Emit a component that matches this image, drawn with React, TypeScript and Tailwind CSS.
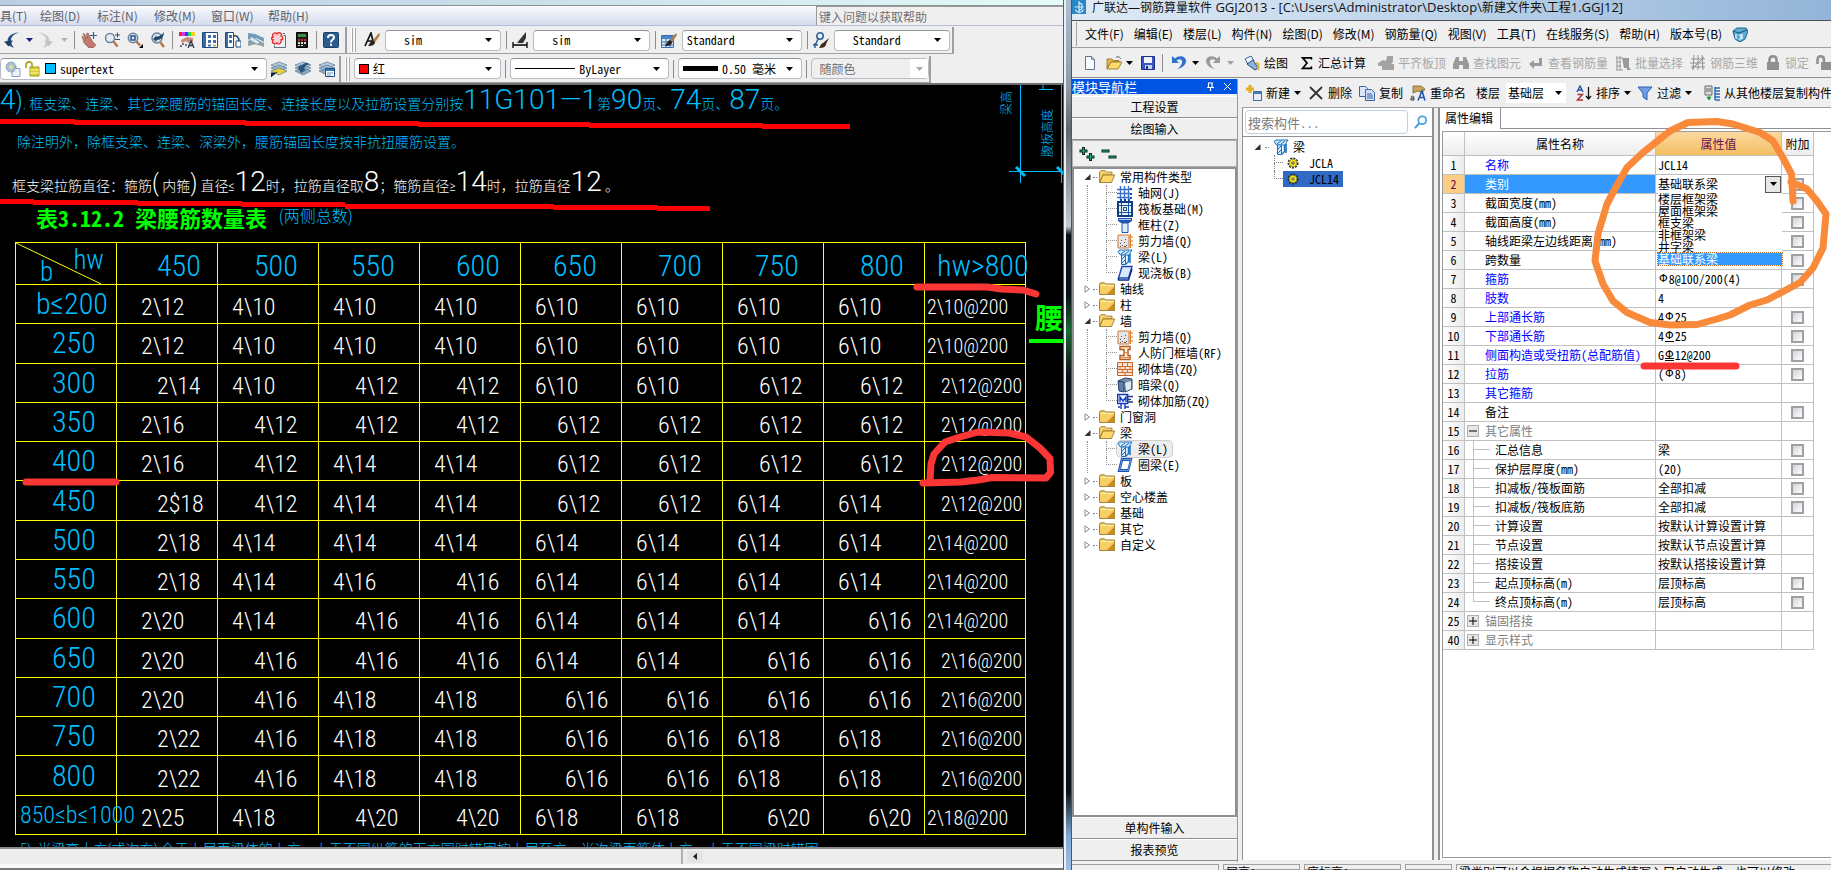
import { ReactNode } from 'react';
import { clsx } from 'clsx';

type IconProps = { children: ReactNode; size?: string; box?: string };

function Icon({ children, size = 'size-4', box = '0 0 16 16' }: IconProps) {
  return (
    <svg viewBox={box} className={clsx('shrink-0', size)} fill="none" aria-hidden="true">
      {children}
    </svg>
  );
}

function Caret({ className = 'text-black' }: { className?: string }) {
  return (
    <svg viewBox="0 0 7 4" className={clsx('h-1 w-[7px] shrink-0', className)} aria-hidden="true">
      <path d="M0 0h7L3.5 4z" fill="currentColor" />
    </svg>
  );
}

/* ---------- CAD toolbar icons ---------- */

const cadIcons = {
  undo: (
    <Icon>
      <path d="M3.500 10C3 5 7 1 15 .5 9 2.500 7 5 7 8.500c0 3 1 5 3 7-4-.5-6-3-6.500-5.500z" fill="#24507f" />
      <path d="M0 9.500l9-1-4.500 6z" fill="#1c3f66" />
    </Icon>
  ),
  redo: (
    <Icon>
      <path d="M12.500 10C13 5 9 1 1 .5c6 2 8 4.500 8 8 0 3-1 5-3 7 4-.5 6-3 6.500-5.500z" fill="#c6c9cc" />
      <path d="M16 9.500l-9-1 4.500 6z" fill="#bfc3c6" />
    </Icon>
  ),
  pan: (
    <Icon>
      <path d="M1 4l4 3-3-5 1-.5L7 6 5.500 1.500 7 1l3 6 2 3 3 3-3 3H8L3 11z" fill="#c07a70" stroke="#8d4a45" strokeWidth=".6" />
      <path d="M12.500 0v7M9 3.500h7" stroke="#35618f" strokeWidth="1.200" />
    </Icon>
  ),
  zoom: (
    <Icon>
      <circle cx="6" cy="6" r="4.500" fill="#e4edf5" stroke="#6d8299" strokeWidth="1.500" />
      <path d="M9.500 9.500l4 5" stroke="#b5764a" strokeWidth="2.500" />
      <path d="M11 3h5M13.500.5v5M11 7.500h5" stroke="#34506e" />
    </Icon>
  ),
  zoomWindow: (
    <Icon>
      <circle cx="6" cy="6" r="4.700" fill="#d6e4ef" stroke="#6d8299" strokeWidth="1.500" />
      <rect x="4" y="4" width="4" height="4" stroke="#1f4f80" strokeWidth="1.400" />
      <path d="M9.500 9.500l3.500 4" stroke="#b5764a" strokeWidth="2.500" />
      <path d="M16 12v4h-4z" fill="#000" />
    </Icon>
  ),
  zoomPrev: (
    <Icon>
      <circle cx="7" cy="6" r="5" fill="#d6e4ef" stroke="#6d8299" strokeWidth="1.500" />
      <path d="M10.500 10.500l3.500 4.500" stroke="#b5764a" strokeWidth="2.500" />
      <path d="M3 7l3.500-3.500V5C10 4 12 3 14 0c0 5-3 8-7.500 8v2z" fill="#1f456d" />
    </Icon>
  ),
  properties: (
    <Icon>
      <path d="M0 0h3v4H0z" fill="#f22" />
      <path d="M3 0h3v4H3z" fill="#d3f" />
      <path d="M6 0h3v4H6z" fill="#33f" />
      <path d="M9 0h3v4H9z" fill="#2d5" />
      <path d="M12 0h4v4h-4z" fill="#fc2" />
      <path d="M2 8l6-3 6 1v4l-5 1-2-2-4 2z" fill="#c98a7d" />
      <path d="M3 11h2v2H3zM6 12h2v2H6zM1 13h2v2H1z" fill="#777" />
      <path d="M9 16l3-7 3 7m-5-2.500h4" stroke="#25384d" strokeWidth="1.300" />
    </Icon>
  ),
  designCenter: (
    <Icon>
      <path d="M.5.5h15v15H.5z" fill="#fff" stroke="#1d4a80" />
      <path d="M1 1h3v14H1z" fill="#3a6ca3" />
      <path d="M6 3h3v3H6zM11 3h3v3h-3zM6 8h3v3H6zM11 8h3v3h-3zM6 12.500h3v2H6z" fill="#3f6ea8" />
      <path d="M11 12.500h3v2h-3z" fill="#d8b13c" />
    </Icon>
  ),
  toolPalettes: (
    <Icon>
      <path d="M.5.5h8v15h-8z" fill="#fff" stroke="#1d4a80" />
      <path d="M1 1h2v14H1z" fill="#3a6ca3" />
      <path d="M4 3h3v3H4zM4 8h3v3H4z" fill="#3f6ea8" />
      <path d="M8 4c4-1 6 1 6 6" stroke="#27496e" strokeWidth="1.600" />
      <path d="M11 9h5v6h-5z" fill="#fff" stroke="#1d4a80" />
    </Icon>
  ),
  sheetSet: (
    <Icon>
      <path d="M0 1l7 1 9 4v4L8 6 0 7z" fill="#6f9dbd" />
      <path d="M0 9l7-2 9 4v4l-8-3-8 2z" fill="#8fa3ab" />
      <path d="M3 4l9 6-2 3-9-5z" fill="#d6e3ea" stroke="#5f8298" strokeWidth=".8" />
    </Icon>
  ),
  markup: (
    <Icon>
      <path d="M12.500 3.500h2v12h-11v-2M12 1.500h2" stroke="#5f6d80" />
      <path d="M1 2h10v11H1z" fill="#fff" />
      <path d="M2 5c-2-4 3-5 4-3 2-3 6 0 4 2 3 1 2 4 0 4 1 4-3 5-4 3-2 2-6 0-4-3-2 0-2-3 0-3z" fill="#fbd0d0" stroke="#e3262c" strokeWidth="1.300" />
    </Icon>
  ),
  calculator: (
    <Icon>
      <path d="M2.500.5h11v15h-11z" fill="#1c1c1c" stroke="#000" />
      <path d="M4 2h8v3H4z" fill="#3f8a4b" />
      <path d="M4 7h2v2H4zM7 7h2v2H7zM10 7h2v2h-2z" fill="#d22" />
      <path d="M4 10h2v2H4zM7 10h2v2H7zM10 10h2v2h-2zM4 13h2v1H4zM7 13h2v1H7z" fill="#ddd" />
    </Icon>
  ),
  help: (
    <Icon>
      <rect x=".5" y=".5" width="15" height="15" rx="1" fill="#2a5c8c" stroke="#184069" />
      <path d="M5 6c0-4 6-4 6-.5 0 2-3 2.200-3 5M8 11.700v2" stroke="#fff" strokeWidth="2" />
    </Icon>
  ),
};

const brush = (
  <>
    <path d="M15 1l-5 6-2 2 2 1.500L12 9l4-6z" fill="#b27a3c" />
    <path d="M9 8c-3 1-3 4-5 6 4 0 7-1 7-4z" fill="#222" />
  </>
);

const textStyleIcon = (
  <Icon>
    <path d="M1 14L7 1l2 8M3 9h6" stroke="#111" strokeWidth="1.700" />
    {brush}
  </Icon>
);
const dimStyleIcon = (
  <Icon>
    <path d="M1 10v6M15 10v6M1 13h14" stroke="#000" strokeWidth="1.300" />
    <path d="M14 0L9 6 5 11h6l3-5z" fill="#333" />
  </Icon>
);
const tableStyleIcon = (
  <Icon>
    <path d="M.5 3.500h12v12H.5z" fill="#dbe9f8" stroke="#3a6cb0" />
    <path d="M1 4h12v3H1z" fill="#4b85cc" />
    <path d="M1 10h12M1 13h12M5 7v8M9 7v8" stroke="#3a6cb0" />
    {brush}
  </Icon>
);
const leaderStyleIcon = (
  <Icon>
    <circle cx="7" cy="4" r="3.200" stroke="#2a6296" strokeWidth="1.600" />
    <path d="M5 7l-3 7M0 13h5M2 11v5" stroke="#2a6296" strokeWidth="1.500" />
    <path d="M16 6l-6 5c-3 1-2 3-4 5 4 0 7-1 7-4z" fill="#3a2d22" />
  </Icon>
);

function LayerIcon({ kind }: { kind: 'make' | 'previous' | 'states' }) {
  return (
    <Icon>
      <path d="M0 4l8-3 8 3-8 4z" fill="#b7cbdc" stroke="#5b7a96" strokeWidth=".7" />
      <path d="M0 7l8-3 8 3-8 4z" fill="#9ab5cc" stroke="#5b7a96" strokeWidth=".7" />
      <path d="M0 10l8-3 8 3-8 4z" fill={kind === 'make' ? '#e8cf35' : '#86a7c2'} stroke="#5b7a96" strokeWidth=".7" />
      {kind === 'make' && <path d="M0 16v-4h4zM1 15l5-4" fill="#123" stroke="#123" />}
      {kind === 'previous' && <path d="M3 7l3-4v2c4-4 8-4 8-1-2-1-4 1-5 4l2 1-5 3z" fill="#2b5580" />}
      {kind === 'states' && (
        <>
          <path d="M6.500 7.500h9v8h-9z" fill="#fff" stroke="#1c4d86" />
          <path d="M7 8h8v2H7z" fill="#3b74b6" />
          <path d="M8 12h6M8 14h4" stroke="#6a90b8" />
        </>
      )}
    </Icon>
  );
}

function Combo({
  label,
  value,
  className,
  pad = 'pl-[18px]',
  children,
}: {
  label: string;
  value: string;
  className: string;
  pad?: string;
  children?: ReactNode;
}) {
  return (
    <div className={clsx('relative flex items-center gap-1 rounded-sm border border-[#b8bcc4] border-t-[#8f949c] bg-white pr-2', pad, className)}>
      {children}
      <select
        aria-label={label}
        defaultValue={value}
        className="min-w-0 flex-1 appearance-none bg-transparent text-xs leading-4 text-black outline-none"
      >
        <option>{value}</option>
      </select>
      <Caret />
    </div>
  );
}

function Separator() {
  return <span className="h-[18px] w-px shrink-0 bg-[#8c8c8c]" />;
}

function Grip() {
  return (
    <span className="flex h-full w-[5px] shrink-0 justify-between py-px">
      <span className="w-0.5 border-r border-[#a8a8a8] bg-white" />
      <span className="w-0.5 border-r border-[#a8a8a8] bg-white" />
    </span>
  );
}

function ToolButton({ label, children }: { label: string; children: ReactNode }) {
  return (
    <button type="button" aria-label={label} className="flex shrink-0 items-center">
      {children}
    </button>
  );
}

const cadTools: [string, ReactNode][] = [
  ['实时平移', cadIcons.pan],
  ['实时缩放', cadIcons.zoom],
  ['窗口缩放', cadIcons.zoomWindow],
  ['缩放上一个', cadIcons.zoomPrev],
];

const cadPalettes: [string, ReactNode][] = [
  ['特性', cadIcons.properties],
  ['设计中心', cadIcons.designCenter],
  ['工具选项板', cadIcons.toolPalettes],
  ['图纸集', cadIcons.sheetSet],
  ['标记集', cadIcons.markup],
  ['计算器', cadIcons.calculator],
];

function CadToolbars() {
  return (
    <div className="h-[59px] border-b-2 border-[#6e6e6e] bg-[#efefef] text-xs [font-family:'Noto_Sans_Mono_CJK_SC','Noto_Sans_CJK_SC',monospace]">
      <div className="flex h-[29px] items-center">
        <div className="flex h-[27px] w-[347px] shrink-0 items-center border-r-2 border-b border-[#a0a0a0] pl-1">
          <ToolButton label="放弃">{cadIcons.undo}</ToolButton>
          <span className="w-1.5" />
          <Caret className="text-[#1b1f8a]" />
          <span className="w-1" />
          <ToolButton label="重做">{cadIcons.redo}</ToolButton>
          <span className="w-2" />
          <Caret className="text-[#b5b5b5]" />
          <span className="w-1.5" />
          <Separator />
          <div className="flex gap-[7px] px-[6px]">
            {cadTools.map(([label, icon]) => (
              <ToolButton key={label} label={label}>
                {icon}
              </ToolButton>
            ))}
          </div>
          <Separator />
          <div className="flex gap-[7px] px-[6px]">
            {cadPalettes.map(([label, icon]) => (
              <ToolButton key={label} label={label}>
                {icon}
              </ToolButton>
            ))}
          </div>
          <Separator />
          <span className="w-1.5" />
          <ToolButton label="帮助">{cadIcons.help}</ToolButton>
        </div>
        <div className="flex h-[27px] w-[607px] items-center border-r-2 border-b border-[#a0a0a0] pl-1">
          <Grip />
          <div className="flex flex-1 items-center gap-[5px] pr-0.5 pl-2">
            {textStyleIcon}
            <Combo label="文字样式" value="sim" className="h-[21px] flex-1" />
            <Separator />
            {dimStyleIcon}
            <Combo label="标注样式" value="sim" className="h-[21px] flex-1" />
            <Separator />
            {tableStyleIcon}
            <Combo label="表格样式" value="Standard" className="h-[21px] w-[120px]" pad="pl-1" />
            <Separator />
            {leaderStyleIcon}
            <Combo label="多重引线样式" value="Standard" className="h-[21px] flex-1" />
          </div>
        </div>
      </div>
      <div className="flex h-7 items-center">
        <div className="flex h-[27px] w-[341px] shrink-0 items-center border-r-2 border-b border-[#a0a0a0]">
          <Combo label="图层" value="supertext" className="h-[22px] w-[267px]" pad="pl-1">
            <Icon>
              <path d="M7 7.500h8v8H7z" fill="#eaf1f8" stroke="#8aa0b8" />
              <circle cx="6" cy="6" r="5" fill="#a9c0d4" stroke="#6f8ba6" strokeDasharray="2 1.200" />
              <circle cx="6" cy="6" r="2" fill="#e3df95" />
            </Icon>
            <Icon>
              <path d="M1 7V4c0-4 6-4 6-1v3" stroke="#a5a01b" strokeWidth="1.600" />
              <path d="M5 6h9v9H5z" fill="#d8d02f" stroke="#a29a12" />
              <path d="M5 9h9M5 12h9" stroke="#fff6a0" />
            </Icon>
            <span className="size-[11px] border border-black bg-[#00bfff]" />
          </Combo>
          <div className="flex gap-2 pl-1">
            <ToolButton label="将对象的图层置为当前">
              <LayerIcon kind="make" />
            </ToolButton>
            <ToolButton label="上一个图层">
              <LayerIcon kind="previous" />
            </ToolButton>
            <ToolButton label="图层状态管理器">
              <LayerIcon kind="states" />
            </ToolButton>
          </div>
        </div>
        <div className="flex h-[27px] w-[590px] items-center gap-1 border-r-2 border-b border-[#a0a0a0] pl-1">
          <Grip />
          <Combo label="颜色" value="红" className="h-[21px] w-[149px]" pad="pl-1">
            <span className="size-[10px] border border-black bg-[#f00]" />
          </Combo>
          <Separator />
          <Combo label="线型" value="ByLayer" className="h-[21px] w-[161px]" pad="pl-1">
            <span className="h-px w-[60px] bg-black" />
          </Combo>
          <Separator />
          <Combo label="线宽" value="0.50 毫米" className="h-[21px] w-[125px]" pad="pl-1">
            <span className="h-[5px] w-[35px] bg-black" />
          </Combo>
          <Separator />
          <div className="flex h-[21px] w-[120px] items-center rounded-sm border border-[#b8bcc4] bg-[#efefef] pl-2">
            <select aria-label="打印样式" disabled className="flex-1 appearance-none bg-transparent text-xs leading-4 text-[#6f6f6f]">
              <option>随颜色</option>
            </select>
            <span className="flex h-full w-[18px] items-center justify-center bg-white">
              <Caret className="text-[#a8a8a8]" />
            </span>
          </div>
        </div>
      </div>
    </div>
  );
}

/* ---------- drawing ---------- */

// Number of web bars by beam width (rows) and web height (columns).
// Each entry keeps the side of the cell where the draughtsman put it: l, m or r.
type Mark = [string, 'l' | 'm' | 'r'];

const padCol: Record<'l' | 'm' | 'r', string> = { l: 'pl-3.5', m: 'pl-9', r: 'pl-11' };
const padFirst: Record<'l' | 'm' | 'r', string> = { l: 'pl-6', m: 'pl-9', r: 'pl-10' };
const padLast: Record<'l' | 'm' | 'r', string> = { l: 'pl-0.5', m: 'pl-4', r: 'pl-4' };

const heights = ['450', '500', '550', '600', '650', '700', '750', '800', 'hw>800'];

const barRows: { b: string; marks: Mark[] }[] = [
  { b: 'b≤200', marks: [['2\\12', 'l'], ['4\\10', 'l'], ['4\\10', 'l'], ['4\\10', 'l'], ['6\\10', 'l'], ['6\\10', 'l'], ['6\\10', 'l'], ['6\\10', 'l'], ['2\\10@200', 'l']] },
  { b: '250', marks: [['2\\12', 'l'], ['4\\10', 'l'], ['4\\10', 'l'], ['4\\10', 'l'], ['6\\10', 'l'], ['6\\10', 'l'], ['6\\10', 'l'], ['6\\10', 'l'], ['2\\10@200', 'l']] },
  { b: '300', marks: [['2\\14', 'r'], ['4\\10', 'l'], ['4\\12', 'm'], ['4\\12', 'm'], ['6\\10', 'l'], ['6\\10', 'l'], ['6\\12', 'm'], ['6\\12', 'm'], ['2\\12@200', 'r']] },
  { b: '350', marks: [['2\\16', 'l'], ['4\\12', 'm'], ['4\\12', 'm'], ['4\\12', 'm'], ['6\\12', 'm'], ['6\\12', 'm'], ['6\\12', 'm'], ['6\\12', 'm'], ['2\\12@200', 'r']] },
  { b: '400', marks: [['2\\16', 'l'], ['4\\12', 'm'], ['4\\14', 'l'], ['4\\14', 'l'], ['6\\12', 'm'], ['6\\12', 'm'], ['6\\12', 'm'], ['6\\12', 'm'], ['2\\12@200', 'r']] },
  { b: '450', marks: [['2$18', 'r'], ['4\\12', 'm'], ['4\\14', 'l'], ['4\\14', 'l'], ['6\\12', 'm'], ['6\\12', 'm'], ['6\\14', 'l'], ['6\\14', 'l'], ['2\\12@200', 'r']] },
  { b: '500', marks: [['2\\18', 'r'], ['4\\14', 'l'], ['4\\14', 'l'], ['4\\14', 'l'], ['6\\14', 'l'], ['6\\14', 'l'], ['6\\14', 'l'], ['6\\14', 'l'], ['2\\14@200', 'l']] },
  { b: '550', marks: [['2\\18', 'r'], ['4\\14', 'l'], ['4\\16', 'l'], ['4\\16', 'm'], ['6\\14', 'l'], ['6\\14', 'l'], ['6\\14', 'l'], ['6\\14', 'l'], ['2\\14@200', 'l']] },
  { b: '600', marks: [['2\\20', 'l'], ['4\\14', 'l'], ['4\\16', 'm'], ['4\\16', 'm'], ['6\\14', 'l'], ['6\\14', 'l'], ['6\\14', 'l'], ['6\\16', 'r'], ['2\\14@200', 'l']] },
  { b: '650', marks: [['2\\20', 'l'], ['4\\16', 'm'], ['4\\16', 'm'], ['4\\16', 'm'], ['6\\14', 'l'], ['6\\14', 'l'], ['6\\16', 'r'], ['6\\16', 'r'], ['2\\16@200', 'm']] },
  { b: '700', marks: [['2\\20', 'l'], ['4\\16', 'm'], ['4\\18', 'l'], ['4\\18', 'l'], ['6\\16', 'r'], ['6\\16', 'r'], ['6\\16', 'r'], ['6\\16', 'r'], ['2\\16@200', 'r']] },
  { b: '750', marks: [['2\\22', 'r'], ['4\\16', 'm'], ['4\\18', 'l'], ['4\\18', 'l'], ['6\\16', 'r'], ['6\\16', 'r'], ['6\\18', 'l'], ['6\\18', 'l'], ['2\\16@200', 'r']] },
  { b: '800', marks: [['2\\22', 'r'], ['4\\16', 'm'], ['4\\18', 'l'], ['4\\18', 'l'], ['6\\16', 'r'], ['6\\16', 'r'], ['6\\18', 'l'], ['6\\18', 'l'], ['2\\16@200', 'r']] },
  { b: '850≤b≤1000', marks: [['2\\25', 'l'], ['4\\18', 'l'], ['4\\20', 'm'], ['4\\20', 'm'], ['6\\18', 'l'], ['6\\18', 'l'], ['6\\20', 'r'], ['6\\20', 'r'], ['2\\18@200', 'l']] },
];

function markPadding(col: number, side: 'l' | 'm' | 'r') {
  if (col === 0) return padFirst[side];
  if (col === heights.length - 1) return padLast[side];
  return padCol[side];
}

function rowHeadClass(b: string) {
  if (b === '850≤b≤1000') return 'pl-1 text-2xl';
  if (b === 'b≤200') return 'pl-5 text-[30px]';
  return 'pl-9 text-[30px]';
}

function Big({ children }: { children: ReactNode }) {
  return <span className="text-[28px] font-light [font-family:Roboto,'Noto_Sans_CJK_SC',sans-serif]">{children}</span>;
}

function BarTable() {
  return (
    <table className="ml-[15px] h-[593px] w-[1011px] table-fixed border-collapse text-white">
      <thead>
        <tr className="h-[42px] text-[30px] leading-[30px] text-[#00bfff]">
          <th scope="col" className="relative border border-[#ff0] p-0 font-light">
            <svg className="absolute inset-0 size-full" viewBox="0 0 101 42" preserveAspectRatio="none" aria-hidden="true">
              <path d="M0 0l86 42" stroke="#ff0" strokeWidth="1" />
            </svg>
            <span className="flex h-10 justify-between pr-3 pl-6 text-[27px]">
              <span className="self-end leading-6">b</span>
              <span className="self-start leading-8">hw</span>
            </span>
          </th>
          {heights.map((h, i) => (
            <th
              key={h}
              scope="col"
              className={clsx(
                'border border-[#ff0] p-0 pt-1 text-left font-light whitespace-nowrap',
                i === 8 ? 'pl-3' : i % 2 ? 'pl-9' : i === 0 ? 'pl-10' : 'pl-8',
              )}
            >
              {h}
            </th>
          ))}
        </tr>
      </thead>
      <tbody>
        {barRows.map(row => (
          <tr key={row.b} className="text-2xl leading-6">
            <th
              scope="row"
              className={clsx('border border-[#ff0] p-0 text-left leading-8 font-light whitespace-nowrap text-[#00bfff]', rowHeadClass(row.b))}
            >
              {row.b}
            </th>
            {row.marks.map(([text, side], col) => (
              <td
                key={col}
                className={clsx(
                  'border border-[#ff0] p-0 pt-1.5 leading-6 whitespace-nowrap',
                  col === 8 && 'text-xl',
                  markPadding(col, side),
                )}
              >
                {text}
              </td>
            ))}
          </tr>
        ))}
      </tbody>
    </table>
  );
}

function CadDrawing() {
  return (
    <div className="relative h-[762px] overflow-hidden bg-black font-light [font-family:'Roboto_Condensed','Noto_Sans_CJK_SC',sans-serif]">
      <div className="flex flex-col text-sm whitespace-nowrap text-[#00bfff]">
        <p className="h-9 leading-[18px]">
          <Big>4</Big>
          <span className="text-2xl">)</span>. 框支梁、连梁、其它梁腰筋的锚固长度、连接长度以及拉筋设置分别按
          <Big>11G101—1</Big>第<Big>90</Big>页、<Big>74</Big>页、<Big>87</Big>页。
        </p>
        <p className="h-[46px] pl-[17px] leading-[42px]">除注明外，除框支梁、连梁、深梁外，腰筋锚固长度按非抗扭腰筋设置。</p>
        <p className="h-8 pl-3 leading-[28px] text-white">
          框支梁拉筋直径：箍筋<span className="text-2xl">(</span> 内箍<span className="text-2xl">)</span> 直径≤<Big>12</Big>时，拉筋直径取
          <Big>8</Big>；箍筋直径≥<Big>14</Big>时，拉筋直径<Big>12</Big> 。
        </p>
        <h2 className="flex h-[43px] items-start gap-3 pl-9 leading-9">
          <span className="text-[22px] font-bold text-[#0f0] [font-family:'Noto_Sans_Mono_CJK_SC',monospace]">表3.12.2 梁腰筋数量表</span>
          <span className="text-base leading-9">(两侧总数)</span>
        </h2>
      </div>
      <BarTable />
      <p className="ml-5 pt-1 text-sm leading-5 whitespace-nowrap text-[#00bfff]">
        5). 当梁高大方(或次方) 全于上层面梁体的上方，上于不同纵筋的下方同时锚固按上层至方，当次梁面筋体上方，上于不同梁时锚固。
      </p>

      <div className="absolute top-0 right-0 h-28 w-[70px] text-[#00bfff]">
        <svg className="absolute inset-0 size-full" viewBox="0 0 70 112" aria-hidden="true">
          <path d="M27.500 0v98M68.500 0v98M16 86.500h54M50 0v4M46 4.500h14" stroke="#00bfff" />
          <path d="M23 82l9 9M64 82l9 9" stroke="#00bfff" strokeWidth="3" />
        </svg>
        <span className="absolute top-1.5 left-1 rotate-180 text-xs leading-5 [text-orientation:sideways] [writing-mode:vertical-rl]">梁高</span>
        <span className="absolute top-6 left-[45px] rotate-180 text-xs leading-5 [text-orientation:sideways] [writing-mode:vertical-rl]">腹板高度</span>
      </div>
      <span className="absolute top-[216px] right-0 border-b-4 border-[#0f0] pl-1.5 text-[28px] leading-[38px] font-bold text-[#0f0]">腰</span>

      <svg className="pointer-events-none absolute top-0 left-0 h-full w-[1064px]" viewBox="0 0 1064 762" fill="none" aria-hidden="true">
        <path d="M0 36.500h75M74 37.500h172M245 38.500h174M418 39.500h172M589 40.500h174M762 41.500h88" stroke="#f00" strokeWidth="5" />
        <path d="M0 116.500h34M33 117.500h105M137 118.500h105M241 119.500h104M345 121.500h209M553 122.500h105M657 123.500h53" stroke="#f00" strokeWidth="5" />
        <g stroke="#fc3535" strokeWidth="7" strokeLinecap="round" strokeLinejoin="round">
          <path d="M26 397h90" />
          <path d="M917 202h70l14 2 22 1 13 4" />
          <path d="M923 398l38-1 17-2 14-2.500 54 .5 4.500-5.500-.5-14L1040 363l-14-11-17-4-31-1-18 5-15 5-11 12-3 10-1 17" />
        </g>
      </svg>
    </div>
  );
}

const cadMenus = ['绘图(D)', '标注(N)', '修改(M)', '窗口(W)', '帮助(H)'];

function CadWindow() {
  return (
    <section className="flex min-w-0 flex-col overflow-hidden border-r border-[#5a6068] bg-[#efefef]">
      <div className="h-[6px] shrink-0 border-b border-[#8d9296] bg-gradient-to-r from-[#b9cfe4] via-[#c9e0ea] to-[#e4fbf8]" />
      <nav className="flex h-5 shrink-0 items-center border-b border-[#b6bdd6] bg-gradient-to-b from-[#fafbfe] to-[#d6dcee] text-xs text-[#5f6266] [font-family:'Noto_Sans_CJK_SC',sans-serif]">
        <a href="#tools" className="w-10">具(T)</a>
        {cadMenus.map(menu => (
          <a key={menu} href="#menu" className="w-[57px]">
            {menu}
          </a>
        ))}
        <input
          aria-label="帮助搜索"
          placeholder="键入问题以获取帮助"
          className="ml-auto h-full w-[247px] border-t border-l border-[#9a9a9a] bg-[#efefef] pl-0.5 placeholder:text-[#6f6f6f] focus:outline-none"
        />
      </nav>
      <CadToolbars />
      <CadDrawing />
      <div className="flex h-[17px] shrink-0 border-t-2 border-[#8a8a8a] bg-[#ededed]">
        <div className="ml-auto flex w-[382px] items-center gap-2 border-l-2 border-[#a9b3b0] pl-1">
          <button type="button" aria-label="向左滚动" className="flex h-3 w-4 items-center justify-center bg-[#e4e4e4]">
            <svg viewBox="0 0 4 7" className="h-[7px] w-1" aria-hidden="true">
              <path d="M4 0v7L0 3.500z" fill="#222" />
            </svg>
          </button>
        </div>
      </div>
      <div className="flex-1 border-b-2 border-[#777] bg-[#fafafa]" />
    </section>
  );
}

/* ---------- rebar software icons ---------- */

function FolderIcon({ open }: { open: boolean }) {
  return open ? (
    <Icon>
      <path d="M.5 13.500V3l1.500-1.500h4L7.500 3H13v3H4z" fill="#f3cf6b" stroke="#9c7a2c" strokeWidth=".8" />
      <path d="M.8 13.500L4 6h11.700l-3.200 7.500z" fill="#ffd86b" stroke="#8c6a1c" strokeWidth=".8" />
    </Icon>
  ) : (
    <Icon>
      <path d="M.5 13.500V3l1-1.200h4L7 3h8.500v10.500z" fill="#f6cf63" stroke="#8c6a1c" strokeWidth=".8" />
      <path d="M1 4.500h14" stroke="#fff0b8" />
      <path d="M8 13L15 6v7z" fill="#cf9018" />
    </Icon>
  );
}

type Glyph = 'axis' | 'raft' | 'column' | 'wall' | 'beam' | 'slab' | 'door' | 'brick' | 'hidden' | 'brickBar' | 'ring';

const glyphs: Record<Glyph, ReactNode> = {
  axis: (
    <Icon>
      <path d="M0 4.500h13M0 8.500h13M0 12.500h13M3.500 1v14M7.500 1v14M11.500 1v14" stroke="#3c6fc8" strokeWidth="1.400" />
      <path d="M13 3h2v2h-2zM13 8h2v2h-2zM13 12h2v2h-2zM3 14h2v2H3zM7 14h2v2H7zM11 14h2v2h-2z" fill="#1746a8" />
    </Icon>
  ),
  raft: (
    <Icon>
      <path d="M1 1h14v14H1z" fill="#e8f1fb" stroke="#0f3f80" strokeWidth="2" />
      <path d="M2 4.500h12M2 11.500h12M4.500 2v12M11.500 2v12" stroke="#15529f" />
      <path d="M6.500 6.500h3v3h-3z" stroke="#15529f" />
    </Icon>
  ),
  column: (
    <Icon>
      <path d="M1 1h14v3l-3 2H4L1 4z" fill="#1f56b0" />
      <path d="M2 2h12v1H2z" fill="#a8c8f0" />
      <path d="M5 6h6v9.500H5z" fill="#dcecfb" stroke="#1f56b0" />
    </Icon>
  ),
  wall: (
    <Icon>
      <path d="M1 2h11v13H1z" fill="#e4e4e4" stroke="#d07a3a" />
      <path d="M3 10h1v1H3zM5 12h1v1H5zM7 9h1v1H7zM9 12h1v1H9zM4 7h1v1H4zM8 6h1v1H8zM3 13h1v1H3zM7 13h2v1H7z" fill="#555" />
      <path d="M13.500 1v14M12 4h4M12 8h4M12 12h4" stroke="#e07a20" />
    </Icon>
  ),
  beam: (
    <Icon>
      <path d="M1 2.500l2-1.500h12l-2 3v2H3.500z" fill="#cfe8fb" stroke="#1c72bf" />
      <path d="M4.500 6h4v9.500h-4z" fill="#cfe8fb" stroke="#1c72bf" />
      <path d="M8.500 15.500l3-3V6" stroke="#1c72bf" strokeWidth="1.400" />
      <path d="M13 5v9" stroke="#1c72bf" strokeWidth="1.600" />
      <path d="M4 5l4-3M8 5l4-3M5 10l3-3M5 14l3-3" stroke="#1c72bf" />
    </Icon>
  ),
  slab: (
    <Icon>
      <path d="M5 1.500h10L11.500 13H1.500z" fill="#d9eafd" stroke="#1b49b8" strokeWidth="1.400" />
      <path d="M1.500 13v2h10L15 4" stroke="#0e2f86" strokeWidth="1.400" />
    </Icon>
  ),
  door: (
    <Icon>
      <path d="M3 1.500h10v3h-2v6h2v4H3v-4h4v-6H3z" fill="#fdeede" stroke="#b05a1c" strokeWidth="1.400" />
      <path d="M7 7.500h4M4 12.500h8" stroke="#d98a48" />
    </Icon>
  ),
  brick: (
    <Icon>
      <path d="M.5 1.500h15v13H.5z" fill="#fbe3d2" stroke="#c0642c" />
      <path d="M1 5.500h14M1 8.500h14M1 11.500h14M5.500 2v3M10.500 2v3M8 6v2M3 6v2M13 6v2M5.500 9v2M10.500 9v2M8 12v2" stroke="#c86e36" />
    </Icon>
  ),
  hidden: (
    <Icon>
      <path d="M1 4l7-3 7 1v10l-7 3V6z" fill="#7b8ea8" stroke="#25426b" />
      <path d="M1 4l6 1v10l-5-1z" fill="#5f7da6" stroke="#25426b" />
      <path d="M8 6l6-2v8l-5 2z" fill="#dfe9f4" />
    </Icon>
  ),
  brickBar: (
    <Icon>
      <path d="M.7 1.500h10v9H.7zM3 9V4l3 4 3-4v5M4 11v5M8 11v5M1 14h2M8 14h4" stroke="#1138c0" strokeWidth="1.400" />
      <path d="M11 3.500h5M11 9h5M11 6.500h3" stroke="#2a3f7a" strokeWidth="1.300" />
    </Icon>
  ),
  ring: (
    <Icon>
      <path d="M4 1h11.500L12 15H.5z" fill="#1c52b4" />
      <path d="M6 4h6.500l-2 8H4z" fill="#fff" />
      <path d="M5 2.500h9l-2.800 11H2.500z" stroke="#9cc2f4" strokeWidth=".6" />
    </Icon>
  ),
};

interface TreeItem {
  label: string;
  children?: { label: string; glyph: Glyph; active?: boolean }[];
}

const moduleTree: TreeItem[] = [
  {
    label: '常用构件类型',
    children: [
      { label: '轴网(J)', glyph: 'axis' },
      { label: '筏板基础(M)', glyph: 'raft' },
      { label: '框柱(Z)', glyph: 'column' },
      { label: '剪力墙(Q)', glyph: 'wall' },
      { label: '梁(L)', glyph: 'beam' },
      { label: '现浇板(B)', glyph: 'slab' },
    ],
  },
  { label: '轴线' },
  { label: '柱' },
  {
    label: '墙',
    children: [
      { label: '剪力墙(Q)', glyph: 'wall' },
      { label: '人防门框墙(RF)', glyph: 'door' },
      { label: '砌体墙(ZQ)', glyph: 'brick' },
      { label: '暗梁(Q)', glyph: 'hidden' },
      { label: '砌体加筋(ZQ)', glyph: 'brickBar' },
    ],
  },
  { label: '门窗洞' },
  {
    label: '梁',
    children: [
      { label: '梁(L)', glyph: 'beam', active: true },
      { label: '圈梁(E)', glyph: 'ring' },
    ],
  },
  { label: '板' },
  { label: '空心楼盖' },
  { label: '基础' },
  { label: '其它' },
  { label: '自定义' },
];

function Twisty({ open }: { open: boolean }) {
  return (
    <svg viewBox="0 0 7 8" className="h-2 w-[7px] shrink-0" fill="none" aria-hidden="true">
      {open ? <path d="M6.500 1v6h-6z" fill="#333" /> : <path d="M1 .8L5.500 4 1 7.200z" stroke="#8a8a8a" />}
    </svg>
  );
}

function ModuleTree() {
  return (
    <ul role="tree" aria-label="构件类型" className="flex-1 overflow-hidden border-2 border-[#8f9094] bg-white pl-[10px] leading-4">
      {moduleTree.map((item, i) => (
        <li key={item.label + i} role="treeitem" aria-expanded={Boolean(item.children)}>
          <button type="button" className="flex h-4 items-center gap-[5px]">
            <span className="flex items-center gap-0.5">
              <Twisty open={Boolean(item.children)} />
              <span className="w-1 border-t border-dotted border-[#808080]" />
              <FolderIcon open={Boolean(item.children)} />
            </span>
            {item.label}
          </button>
          {item.children && (
            <ul role="group" className="ml-[3px] border-l border-dotted border-[#909090] pl-[18px]">
              {item.children.map((child, k) => (
                <li key={child.label} role="treeitem" className="flex h-4 items-center">
                  <span className="flex h-4 w-[11px] flex-col">
                    <span className="h-2 border-b border-l border-dotted border-[#909090]" />
                    <span className={clsx('h-2 border-[#909090]', k < item.children!.length - 1 && 'border-l border-dotted')} />
                  </span>
                  <button
                    type="button"
                    className={clsx(
                      'flex h-4 items-center gap-[5px] rounded-sm pr-1',
                      child.active && 'bg-[#ededed] ring-1 ring-[#cfcfcf]',
                    )}
                  >
                    {glyphs[child.glyph]}
                    {child.label}
                  </button>
                </li>
              ))}
            </ul>
          )}
        </li>
      ))}
    </ul>
  );
}

function PanelButton({ children }: { children: ReactNode }) {
  return (
    <button type="button" className="h-[22px] w-full border-t border-b border-t-white border-b-[#8f8f8f] bg-[#efefef] text-center leading-5">
      {children}
    </button>
  );
}

function ModuleNav() {
  return (
    <aside className="flex w-[166px] shrink-0 flex-col border-r border-[#9a9a9a]">
      <header className="mb-0.5 flex h-[15px] items-center bg-[#0054e3] text-[13px] leading-[15px] text-white">
        <h2>模块导航栏</h2>
        <button type="button" aria-label="固定" className="ml-auto">
          <svg viewBox="0 0 9 9" className="size-[9px]" fill="none" aria-hidden="true">
            <path d="M2.500 1v4.500M6 1v4.500M2 1h5M1 5.500h7M4.500 6v3" stroke="#fff" strokeWidth="1.200" />
          </svg>
        </button>
        <button type="button" aria-label="关闭" className="mx-[5px] ml-2">
          <svg viewBox="0 0 9 9" className="size-[9px]" aria-hidden="true">
            <path d="M1 1l7 7M8 1L1 8" stroke="#fff" />
          </svg>
        </button>
      </header>
      <PanelButton>工程设置</PanelButton>
      <PanelButton>绘图输入</PanelButton>
      <div className="flex h-[27px] items-center gap-1.5 border border-[#b0b0b0] bg-[#efefef] pl-1.5">
        <button type="button" aria-label="全部展开">
          <Icon>
            <path d="M4.500 1v8M.5 5h8M11.500 7v8M7.500 11h8" stroke="#0b2b22" strokeWidth="3" />
            <path d="M4.500 2v6M1.500 5h6M11.500 8v6M8.500 11h6" stroke="#22a884" />
          </Icon>
        </button>
        <button type="button" aria-label="全部折叠">
          <Icon>
            <path d="M.5 5h8M7.500 11h8" stroke="#0b2b22" strokeWidth="3" />
            <path d="M1.500 5h6M8.500 11h6" stroke="#22a884" />
          </Icon>
        </button>
      </div>
      <ModuleTree />
      <PanelButton>单构件输入</PanelButton>
      <PanelButton>报表预览</PanelButton>
      <div className="h-px" />
    </aside>
  );
}

const titleMenus = ['文件(F)', '编辑(E)', '楼层(L)', '构件(N)', '绘图(D)', '修改(M)', '钢筋量(Q)', '视图(V)', '工具(T)', '在线服务(S)', '帮助(H)', '版本号(B)'];

function IconAction({ icon, label, disabled, caret }: { icon?: ReactNode; label: string; disabled?: boolean; caret?: boolean }) {
  return (
    <button
      type="button"
      disabled={disabled}
      className={clsx('flex shrink-0 items-center gap-1 whitespace-nowrap', disabled && 'text-[#a8a8a8]')}
    >
      {icon}
      {label}
      {caret && <Caret />}
    </button>
  );
}

function MainToolbar() {
  return (
    <div className="flex h-[30px] shrink-0 items-center overflow-hidden border-b border-[#8f8f8f] bg-[#efefef] pl-1 text-xs">
      <span className="h-6 w-px bg-[#a0a0a0]" />
      <div className="flex w-[158px] shrink-0 items-center pl-1.5">
        <ToolButton label="新建">
          <Icon>
            <path d="M3.500 1.500h6l3 3v10h-9z" fill="#f8fbff" stroke="#5a7390" />
            <path d="M9.500 1.500v3h3z" fill="#b9cbe0" stroke="#5a7390" strokeWidth=".7" />
          </Icon>
        </ToolButton>
        <span className="w-2" />
        <ToolButton label="打开">
          <Icon>
            <path d="M1 13.500V4h5l1.500 1.500H13V7H5z" fill="#e3b94d" stroke="#8c6a1c" strokeWidth=".8" />
            <path d="M1 14l4-7h11l-4 7z" fill="#ffd970" stroke="#8c6a1c" strokeWidth=".8" />
            <path d="M10 2.500c2-1.500 4-.5 4.500 1.500" stroke="#555" />
          </Icon>
        </ToolButton>
        <span className="w-1" />
        <Caret />
        <span className="w-2" />
        <ToolButton label="保存">
          <Icon>
            <path d="M1.500 1.500h13v13h-13z" fill="#3a55c4" stroke="#1d2f86" />
            <path d="M4 2h8v6H4z" fill="#eef3ff" />
            <path d="M5 10h7v4H5z" fill="#c9d3ee" />
            <path d="M6 11h2v3H6z" fill="#1d2f86" />
          </Icon>
        </ToolButton>
        <span className="w-1.5" />
        <Separator />
        <span className="w-2" />
        <ToolButton label="撤销">
          <Icon>
            <path d="M1 1v7h7L5.500 5.500C9 3 12 5 11 8s-3 5-5 6c5-1 9-4 9-8 0-5-7-6.500-11-2.500z" fill="#2f6fd0" />
          </Icon>
        </ToolButton>
        <span className="w-1.5" />
        <Caret />
        <span className="w-1.5" />
        <ToolButton label="恢复">
          <Icon>
            <path d="M15 1v7H8l2.500-2.500C7 3 4 5 5 8s3 5 5 6C5 13 1 10 1 6c0-5 7-6.500 11-2.500z" fill="#9a9a9a" />
          </Icon>
        </ToolButton>
        <span className="w-1.5" />
        <Caret className="text-[#a0a0a0]" />
      </div>
      <span className="h-full w-px bg-[#a0a0a0]" />
      <span className="ml-1 h-6 w-px bg-[#a0a0a0]" />
      <div className="flex shrink-0 items-center gap-3 pl-1.5">
        <IconAction
          label="绘图"
          icon={
            <Icon>
              <path d="M1 4l6-3 3 5-6 3z" fill="#eef3fa" stroke="#3b5f92" />
              <path d="M3 9l6-4 5 8-3 2z" fill="#8fb3e0" stroke="#27497a" />
              <path d="M12 8c3 0 3 3 2 7" stroke="#e0b52c" strokeWidth="2" />
            </Icon>
          }
        />
        <IconAction
          label="汇总计算"
          icon={
            <Icon size="size-[14px]">
              <path d="M13 4V2H3l5 6-5 6h10v-2" stroke="#000" strokeWidth="2" />
            </Icon>
          }
        />
        <div className="flex items-center gap-[7px]">
          <IconAction
            disabled
            label="平齐板顶"
            icon={
              <Icon>
                <path d="M0 8l5-3 3 1 1-5h6v6l-2 2h3v6H4v-4H0z" fill="#a3a3a3" />
              </Icon>
            }
          />
          <IconAction
            disabled
            label="查找图元"
            icon={
              <Icon>
                <path d="M0 14V9l3-7h3v4h4V2h3l3 7v5h-6v-4H6v4z" fill="#9a9a9a" />
              </Icon>
            }
          />
          <IconAction
            disabled
            label="查看钢筋量"
            icon={
              <Icon>
                <path d="M1 9l5-4v3h5V3h3v8H6v3z" fill="#9a9a9a" />
              </Icon>
            }
          />
          <IconAction
            disabled
            label="批量选择"
            icon={
              <Icon>
                <path d="M1 3h7M1 7h5M1 11h5M1 15h7M2 1v14M5 1v14" stroke="#9a9a9a" />
                <path d="M7 3h7v10H9zM12 10l4 5h-4z" fill="#9a9a9a" />
              </Icon>
            }
          />
          <IconAction
            disabled
            label="钢筋三维"
            icon={
              <Icon>
                <path d="M1 4h14M0 8h15M1 12h14M4 0L3 15M8 0v15M12 0l1 15M2 14L14 2" stroke="#8f8f8f" />
              </Icon>
            }
          />
          <IconAction
            disabled
            label="锁定"
            icon={
              <Icon>
                <path d="M2 7h12v8H2z" fill="#8f8f8f" />
                <path d="M4.500 8V5c0-5 7-5 7 0v3" stroke="#8f8f8f" strokeWidth="2.500" />
              </Icon>
            }
          />
          <ToolButton label="解锁">
            <Icon>
              <path d="M5 7h11v8H5z" fill="#8f8f8f" />
              <path d="M1.500 9V5c0-5 6.500-5 6.500 0v3" stroke="#8f8f8f" strokeWidth="2.500" />
            </Icon>
          </ToolButton>
        </div>
      </div>
    </div>
  );
}

function ComponentToolbar() {
  return (
    <div className="flex h-[29px] shrink-0 items-center overflow-hidden border-b border-[#a0a0a0] bg-[#efefef] pl-1 text-xs">
      <div className="flex shrink-0 items-center gap-[7px] pr-[7px]">
        <IconAction
          label="新建"
          caret
          icon={
            <Icon>
              <path d="M4 0v8M0 4h8" stroke="#e0b020" strokeWidth="3" />
              <path d="M7.500 6.500h8v9h-8z" fill="#e4eefa" stroke="#4a6a92" />
              <path d="M8 7h7v2H8z" fill="#4a7ab8" />
            </Icon>
          }
        />
        <IconAction
          label="删除"
          icon={
            <Icon>
              <path d="M2 2l12 12M14 2L2 14" stroke="#333" strokeWidth="1.800" />
            </Icon>
          }
        />
        <IconAction
          label="复制"
          icon={
            <Icon>
              <path d="M.5 1.500h6l2 2v8h-8z" fill="#d8e6f8" stroke="#3b64a4" />
              <path d="M6.500 4.500h6l3 3v8h-9z" fill="#cfe0f6" stroke="#3b64a4" />
              <path d="M8 9h5M8 11h6M8 13h6" stroke="#3b64a4" />
            </Icon>
          }
        />
        <IconAction
          label="重命名"
          icon={
            <Icon>
              <path d="M3 1h8l4 3-3 4-4-2-5 2z" fill="#c9a55a" stroke="#6a5428" strokeWidth=".7" />
              <path d="M1 12c2-2 3-1 3 3M4 13H1v2h3" stroke="#333" />
              <path d="M8 15.500L12 6l3 9.500m-5.500-3h4.500" stroke="#2456b0" strokeWidth="1.600" />
            </Icon>
          }
        />
      </div>
      <span className="h-6 w-px bg-[#a0a0a0]" />
      <label className="flex shrink-0 items-center gap-1.5 pr-[4px] pl-[3px]">
        楼层
        <span className="flex h-5 w-[60px] items-center bg-white pr-1 pl-0.5">
          <select defaultValue="基础层" className="w-11 min-w-0 flex-1 appearance-none bg-transparent outline-none">
            <option>基础层</option>
          </select>
          <Caret />
        </span>
      </label>
      <span className="h-6 w-px bg-[#a0a0a0]" />
      <div className="flex shrink-0 items-center gap-1.5 px-1.5">
        <IconAction
          label="排序"
          caret
          icon={
            <Icon>
              <path d="M1 7l3-6 3 6M2 5h4" stroke="#2456b0" strokeWidth="1.400" />
              <path d="M1.500 9.500h5L1.500 15H7" stroke="#a33" strokeWidth="1.400" />
              <path d="M12.500 2v12M10 11l2.500 3L15 11" stroke="#111" strokeWidth="1.300" />
            </Icon>
          }
        />
        <IconAction
          label="过滤"
          caret
          icon={
            <Icon>
              <path d="M1 2h14l-5 6v7l-4-3V8z" fill="#6fa0e6" stroke="#2c5cae" />
            </Icon>
          }
        />
      </div>
      <span className="h-6 w-px bg-[#a0a0a0]" />
      <div className="pl-1.5">
        <IconAction
          label="从其他楼层复制构件"
          icon={
            <Icon>
              <path d="M1 1h7v9H1z" fill="#ddd" stroke="#666" />
              <path d="M3 12h4l-2 3z" fill="#1a9a3c" stroke="#1a9a3c" />
              <path d="M2 4h5M2 6h5" stroke="#666" />
              <path d="M11 2v13M11 3h5M11 6h5M11 9h5M11 12h5M11 15h5" stroke="#2c6cb8" strokeWidth="1.500" />
            </Icon>
          }
        />
      </div>
    </div>
  );
}

const gear = (
  <Icon size="size-3" box="0 0 12 12">
    <circle cx="6" cy="6" r="4.800" stroke="#222" strokeWidth="1.400" strokeDasharray="2 1.200" />
    <circle cx="6" cy="6" r="3.800" fill="#f3e61a" stroke="#7a7210" strokeWidth=".7" />
    <circle cx="6" cy="6" r="1.200" fill="#fff" stroke="#222" strokeWidth=".8" />
  </Icon>
);

function ComponentList() {
  return (
    <section className="flex w-[192px] shrink-0 flex-col border-r-2 border-l border-[#8f9094] bg-white">
      <div className="flex h-[29px] shrink-0 items-center gap-1.5 border-b border-[#8f9094] bg-white pl-0.5">
        <input
          aria-label="搜索构件"
          placeholder="搜索构件..."
          className="h-6 w-[163px] rounded-sm border border-[#c3d0de] pl-0.5 text-[13px] placeholder:text-[#7a7a7a] focus:outline-none"
        />
        <button type="button" aria-label="搜索">
          <Icon size="size-[14px]">
            <circle cx="9.500" cy="6" r="4.500" stroke="#4aa3e0" strokeWidth="2" />
            <path d="M6 9.500L1 15" stroke="#4aa3e0" strokeWidth="2.500" />
          </Icon>
        </button>
      </div>
      <ul role="tree" aria-label="构件列表" className="pt-0.5 pl-[11px] leading-4">
        <li role="treeitem" aria-expanded="true">
          <button type="button" className="flex h-4 items-center gap-1">
            <Twisty open />
            <span className="w-1 border-t border-dotted border-[#808080]" />
            {glyphs.beam}
            梁
          </button>
          <ul role="group" className="ml-5">
            {['JCLA', 'JCL14'].map((name, i) => (
              <li key={name} role="treeitem" aria-selected={i === 1} className="flex h-4 items-center">
                <span className="flex h-4 w-[9px] flex-col">
                  <span className="h-2 border-b border-l border-dotted border-[#808080]" />
                  <span className={clsx('h-2 border-[#808080]', i === 0 && 'border-l border-dotted')} />
                </span>
                <button
                  type="button"
                  className={clsx('flex h-4 items-center gap-2.5 pr-1 pl-[4px]', i === 1 && 'bg-[#316ac5] pr-1')}
                >
                  {gear}
                  {name}
                </button>
              </li>
            ))}
          </ul>
        </li>
      </ul>
    </section>
  );
}

/* ---------- property table ---------- */

interface Property {
  no: number;
  name: string;
  value?: ReactNode;
  check?: boolean;
  tone?: 'blue' | 'group';
  level?: number;
  last?: boolean;
}

// Diameter mark with one or two base strokes for the steel grade.
function Phi({ grade = 1 }: { grade?: 1 | 2 | 3 }) {
  return (
    <span
      className={clsx(
        'mx-px inline-block h-3 text-[11px] leading-3 [font-family:"DejaVu_Sans",sans-serif]',
        grade === 2 && 'border-b border-black',
        grade === 3 && 'border-b-3 border-double border-black',
      )}
    >
      Φ
    </span>
  );
}

const properties: Property[] = [
  { no: 1, name: '名称', value: 'JCL14', tone: 'blue' },
  { no: 2, name: '类别', value: '基础联系梁', check: true },
  { no: 3, name: '截面宽度(mm)', check: true },
  { no: 4, name: '截面高度(mm)', check: true },
  { no: 5, name: '轴线距梁左边线距离(mm)', check: true },
  { no: 6, name: '跨数量', check: true },
  { no: 7, name: '箍筋', value: <><Phi />8@100/200(4)</>, check: true, tone: 'blue' },
  { no: 8, name: '肢数', value: '4', tone: 'blue' },
  { no: 9, name: '上部通长筋', value: <>4<Phi grade={2} />25</>, check: true, tone: 'blue' },
  { no: 10, name: '下部通长筋', value: <>4<Phi grade={2} />25</>, check: true, tone: 'blue' },
  { no: 11, name: '侧面构造或受扭筋(总配筋值)', value: <>G<Phi grade={3} />12@200</>, check: true, tone: 'blue' },
  { no: 12, name: '拉筋', value: <>(<Phi />8)</>, check: true, tone: 'blue' },
  { no: 13, name: '其它箍筋', tone: 'blue' },
  { no: 14, name: '备注', check: true },
  { no: 15, name: '其它属性', tone: 'group' },
  { no: 16, name: '汇总信息', value: '梁', check: true, level: 1 },
  { no: 17, name: '保护层厚度(mm)', value: '(20)', check: true, level: 1 },
  { no: 18, name: '扣减板/筏板面筋', value: '全部扣减', check: true, level: 1 },
  { no: 19, name: '扣减板/筏板底筋', value: '全部扣减', check: true, level: 1 },
  { no: 20, name: '计算设置', value: '按默认计算设置计算', level: 1 },
  { no: 21, name: '节点设置', value: '按默认节点设置计算', level: 1 },
  { no: 22, name: '搭接设置', value: '按默认搭接设置计算', level: 1 },
  { no: 23, name: '起点顶标高(m)', value: '层顶标高', check: true, level: 1 },
  { no: 24, name: '终点顶标高(m)', value: '层顶标高', check: true, level: 1, last: true },
  { no: 25, name: '锚固搭接', tone: 'group' },
  { no: 40, name: '显示样式', tone: 'group' },
];

const beamTypes = ['楼层框架梁', '屋面框架梁', '框支梁', '非框架梁', '井字梁', '基础联系梁'];

function TypePicker() {
  return (
    <div className="relative flex h-[18px] items-center">
      <select aria-label="类别" defaultValue="基础联系梁" className="min-w-0 flex-1 appearance-none bg-white outline-none">
        {beamTypes.map(type => (
          <option key={type}>{type}</option>
        ))}
      </select>
      <span className="flex h-[17px] w-4 items-center justify-center border border-[#555] bg-[#e8e8e8]">
        <Caret />
      </span>
      <ul role="listbox" aria-label="类别选项" className="absolute top-[18px] left-0 z-10 w-[124px] bg-white leading-3">
        {beamTypes.map((type, i) => (
          <li
            key={type}
            role="option"
            aria-selected={i === 5}
            className={clsx('h-3', i === 5 && 'bg-[#3399ff] text-white outline outline-dotted outline-[#c66a20]')}
          >
            {type}
          </li>
        ))}
      </ul>
    </div>
  );
}

function PropertyRow({ row }: { row: Property }) {
  const selected = row.no === 2;
  return (
    <tr className="h-[19px] leading-[18px]">
      <th
        scope="row"
        className={clsx(
          'border-r border-b border-[#c0c0c0] p-0 text-center font-normal',
          selected ? 'bg-[#fbcd85] text-[#6a1050]' : 'bg-gradient-to-r from-white to-[#ececec]',
        )}
      >
        {row.no}
      </th>
      <td
        className={clsx(
          'border-r border-b border-[#c0c0c0] p-0 whitespace-nowrap',
          selected && 'bg-[#3399ff] text-white',
          row.tone === 'blue' && 'text-[#0000ff]',
          row.tone === 'group' && 'text-[#808080]',
        )}
      >
        <div className="flex h-[18px] items-center">
          {row.tone === 'group' ? (
            <button
              type="button"
              aria-label={row.no === 15 ? '收起' : '展开'}
              className="mr-1.5 ml-0.5 flex size-3 items-center justify-center border border-[#b0b0b0] bg-[#e6e6e6]"
            >
              <svg viewBox="0 0 8 8" className="size-2" aria-hidden="true">
                <path d={row.no === 15 ? 'M0 4h8' : 'M0 4h8M4 0v8'} stroke="#000" />
              </svg>
            </button>
          ) : row.level ? (
            <span className="mr-[5px] ml-2 flex h-[19px] w-[17px] flex-col">
              <span className="h-[9px] border-b border-l border-[#c0c0c0]" />
              <span className={clsx('h-[10px] border-[#c0c0c0]', !row.last && 'border-l')} />
            </span>
          ) : (
            <span className="w-5" />
          )}
          {row.name}
        </div>
      </td>
      <td className="border-r border-b border-[#c0c0c0] p-0 pl-0.5 whitespace-nowrap">
        {selected ? <TypePicker /> : <div className="flex h-[18px] items-center">{row.value}</div>}
      </td>
      <td className="border-r border-b border-[#c0c0c0] p-0">
        {row.check && (
          <input
            type="checkbox"
            aria-label={`附加 ${row.name}`}
            className="mx-auto block size-[13px] appearance-none border-2 border-[#a0a0a0] bg-gradient-to-br from-[#cfd3da] to-white"
          />
        )}
      </td>
    </tr>
  );
}

function PropertyPanel() {
  return (
    <section className="relative ml-1 flex min-w-0 flex-1 flex-col border-l-2 border-[#8f9094] bg-white">
      <div className="flex h-[21px] shrink-0">
        <h2 className="h-[21px] w-[61px] border-r border-[#8f9094] pl-[5px] leading-5">属性编辑</h2>
        <div className="flex-1 border-b border-[#8f9094]" />
      </div>
      <div className="mt-0.5 mb-0.5 ml-0.5 flex-1 overflow-hidden border-t border-b border-l border-[#9a9a9a]">
        <table className="w-[371px] table-fixed border-separate border-spacing-0">
          <colgroup>
            <col className="w-[22px]" />
            <col className="w-[191px]" />
            <col className="w-[126px]" />
            <col className="w-8" />
          </colgroup>
          <thead>
            <tr className="h-6 bg-gradient-to-b from-white to-[#ececec]">
              <th aria-label="序号" className="border-r border-b border-[#c0c0c0] p-0" />
              <th scope="col" className="border-r border-b border-[#c0c0c0] p-0 font-normal">
                属性名称
              </th>
              <th scope="col" className="border-r border-b border-[#c0c0c0] bg-gradient-to-b from-[#fbd9a0] to-[#f2bd60] p-0 font-normal text-[#6a1050]">
                属性值
              </th>
              <th scope="col" className="border-r border-b border-[#c0c0c0] p-0 font-normal">
                附加
              </th>
            </tr>
          </thead>
          <tbody>
            {properties.map(row => (
              <PropertyRow key={row.no} row={row} />
            ))}
          </tbody>
        </table>
      </div>
      <svg
        className="pointer-events-none absolute top-0 left-0 z-20 h-[280px] w-[393px]"
        viewBox="1440 107 393 280"
        fill="none"
        strokeLinecap="round"
        strokeLinejoin="round"
        aria-hidden="true"
      >
        <path
          d="M1793 200L1791.500 173 1783 157 1773 140 1760 131.500 1733 123 1717 120.500 1688 121.500 1670 130 1643 151.500 1627 166.500 1616.500 185 1607 203 1598 233 1595 260 1603 283 1613 300 1627 311.500 1650 321.500 1670 324 1697 323.500 1717 318 1730 314 1750 304 1767 299 1800 281.500 1813 267 1823 247 1826 213 1817 200 1807 188 1791 181"
          stroke="#f98a3a"
          strokeWidth="7"
        />
        <path d="M1644 365h92" stroke="#fc3535" strokeWidth="7" />
      </svg>
    </section>
  );
}

function RebarWindow() {
  return (
    <section className="flex min-w-0 overflow-hidden">
      <div className="w-2 shrink-0 border-r border-l-2 border-l-[#e8f0f6] border-r-[#555] bg-[linear-gradient(#a9bfd3_0%,#8f9ba6_10%,#5f656b_15%,#c4ccd2_26%,#0b1216_27%,#0b1216_34%,#1c6a38_38%,#0b1216_43%,#0b1216_91%,#7ea8d6_96%,#9dbfe6_100%)]" />
      <div className="flex min-w-0 flex-1 flex-col bg-[#efefef] text-xs [font-family:'Noto_Sans_Mono_CJK_SC','Noto_Sans_CJK_SC',monospace]">
        <header className="flex h-[21px] shrink-0 items-start gap-1.5 border-b border-[#4a4f55] bg-gradient-to-r from-[#dfeaf5] via-[#bcd3ea] to-[#93b4d8] [font-family:'Open_Sans','Noto_Sans_CJK_SC',sans-serif]">
          <Icon size="size-[14px]">
            <path d="M0 0h16v16H0z" fill="#2a86c4" />
            <path d="M8 1v14M3 8h10M8 3.500c5 0 5 8 0 8M4 11c1 4 8 4 9 0" stroke="#d5f0ff" strokeWidth="1.300" />
          </Icon>
          <h1 className="text-[13px] leading-[13px] whitespace-nowrap text-[#111]">
            <span className="text-xs">广联达—钢筋算量软件</span> GGJ2013 - [C:\Users\Administrator\Desktop\<span className="text-xs">新建文件夹</span>\
            <span className="text-xs">工程</span>1.GGJ12]
          </h1>
        </header>
        <nav className="flex h-[27px] shrink-0 items-center border-b border-[#a0a0a0] whitespace-nowrap [font-family:'Noto_Sans_CJK_SC',sans-serif]">
          <span className="mr-2 ml-1 h-6 w-px bg-[#a0a0a0]" />
          <div className="flex items-center gap-[10px]">
            {titleMenus.map(menu => (
              <a key={menu} href="#menu">
                {menu}
              </a>
            ))}
            <Icon>
              <path d="M1 5l4-3 9 0 2 3-3 8-5 3-5-3z" fill="#5aaed6" stroke="#1f5f86" />
              <path d="M1 5l6 2 8-3" stroke="#1f5f86" strokeWidth="1.200" />
              <path d="M4 8v5M7 9c3-1 3 5 0 4M10 8v5" stroke="#e3f5ff" strokeWidth="1.300" />
            </Icon>
          </div>
        </nav>
        <MainToolbar />
        <div className="flex min-h-0 flex-1 pt-px">
          <ModuleNav />
          <div className="ml-1 flex min-w-0 flex-1 flex-col">
            <ComponentToolbar />
            <div className="flex min-h-0 flex-1 pb-0.5">
              <ComponentList />
              <PropertyPanel />
            </div>
          </div>
        </div>
        <footer className="flex h-2 shrink-0 gap-1 overflow-hidden pt-0.5 leading-[14px] whitespace-nowrap">
          <span className="w-[147px] shrink-0 border-t border-r border-[#a0a0a0]" />
          <span className="w-[77px] shrink-0 border border-[#a0a0a0] pl-0.5">层高：</span>
          <span className="w-[97px] shrink-0 border border-[#a0a0a0] pl-0.5">底标高：</span>
          <span className="w-[47px] shrink-0 border border-[#a0a0a0]" />
          <span className="flex-1 border-t border-l border-[#a0a0a0] pl-0.5">梁类别可以会根据名称自动生成填写入口自动生成，也可以修改</span>
        </footer>
      </div>
    </section>
  );
}

export default function App() {
  return (
    <main className="grid h-screen grid-cols-[1064fr_767fr] overflow-hidden bg-[#efefef]">
      <CadWindow />
      <RebarWindow />
    </main>
  );
}
